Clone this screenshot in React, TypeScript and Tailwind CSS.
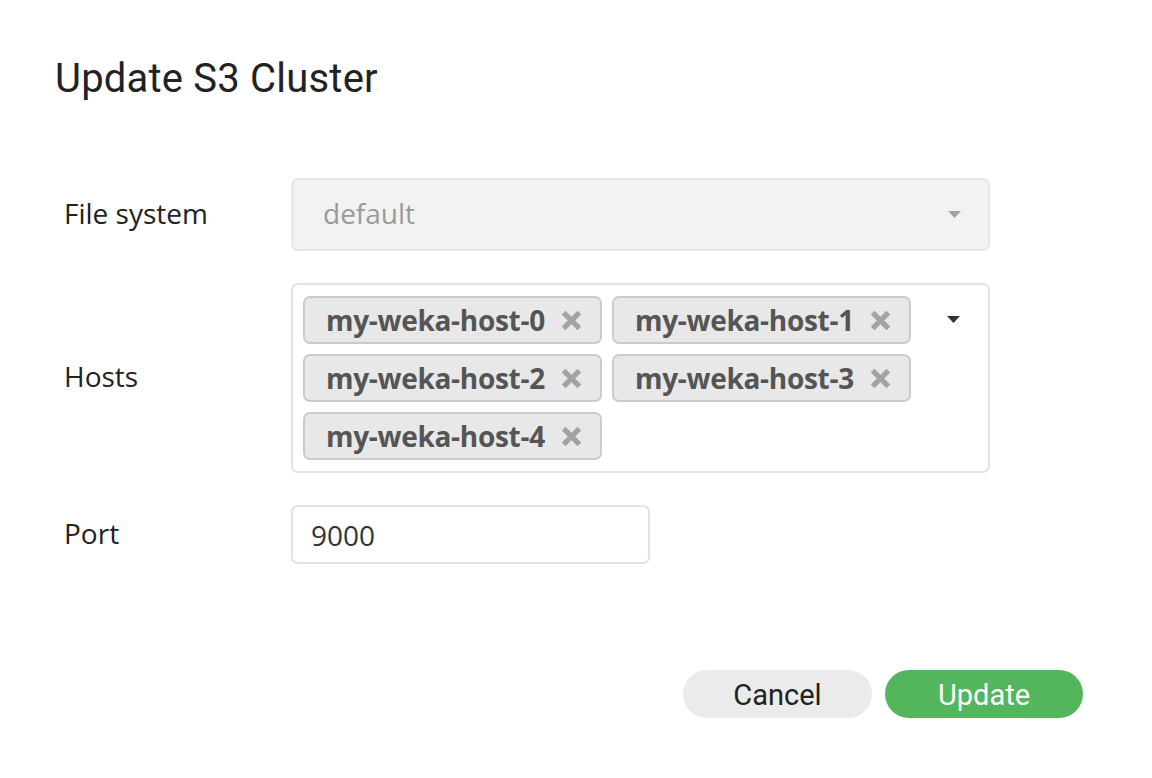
import React from 'react';

const hosts = ['my-weka-host-0', 'my-weka-host-1', 'my-weka-host-2', 'my-weka-host-3', 'my-weka-host-4'];

const Caret: React.FC<{ color: string }> = ({ color }) => (
  <svg width="13" height="7" viewBox="0 0 13 7">
    <path d="M0 0 L13 0 L6.5 7 Z" fill={color} />
  </svg>
);

const RemoveIcon = () => (
  <svg width="21" height="21" viewBox="0 0 20 20">
    <path d="M2.5 2.5 L17.5 17.5 M17.5 2.5 L2.5 17.5" stroke="#a3a3a3" strokeWidth="5" strokeLinecap="butt" />
  </svg>
);

const Chip: React.FC<{ name: string }> = ({ name }) => (
  <div className="flex items-center h-[48px] w-[299px] pl-[21px] pr-[18px] bg-[#e8e8e8] border-2 border-[#cbcbcb] rounded-[7px]">
    <span className="text-[28px] leading-none font-bold text-[#555555] tracking-[-0.3px]">{name}</span>
    <span className="ml-auto flex items-center">
      <RemoveIcon />
    </span>
  </div>
);

const App: React.FC = () => {
  const body = { fontFamily: '"Open Sans", "Liberation Sans", sans-serif' };
  const head = { fontFamily: 'Roboto, "Open Sans", sans-serif' };

  return (
    <div className="w-[1152px] h-[778px] bg-white text-[#222222] pl-[55px] pt-[54px]" style={body}>
      <h1 className="text-[40px] leading-[50px] text-[#222222] tracking-[0.2px]" style={head}>
        Update S3 Cluster
      </h1>

      <div className="pl-[9px] mt-[74px] flex flex-col">
        {/* file system */}
        <div className="flex items-center">
          <label className="w-[227px] text-[28px] pb-[4px]">File system</label>
          <div className="flex items-center w-[699px] h-[73px] bg-[#f2f2f2] border-2 border-[#e6e6e6] rounded-[7px] pl-[30px] pr-[27px]">
            <span className="text-[28px] text-[#9a9a9a] pb-[4px]">default</span>
            <span className="ml-auto">
              <Caret color="#a0a0a0" />
            </span>
          </div>
        </div>

        {/* hosts */}
        <div className="flex items-center mt-[32px]">
          <label className="w-[227px] text-[28px] pb-[4px]">Hosts</label>
          <div className="flex items-start w-[699px] h-[190px] border-2 border-[#e2e2e2] rounded-[7px] pl-[10px] pt-[11px] pr-[28px]">
            <div className="w-[610px] flex flex-wrap gap-[10px]">
              {hosts.map((h) => (
                <Chip key={h} name={h} />
              ))}
            </div>
            <span className="ml-auto mt-[20px]">
              <Caret color="#333333" />
            </span>
          </div>
        </div>

        {/* port */}
        <div className="flex items-center mt-[32px]">
          <label className="w-[227px] text-[28px] pb-[4px]">Port</label>
          <div className="flex items-center w-[359px] h-[59px] border-2 border-[#e2e2e2] rounded-[7px] pl-[18px]">
            <span className="text-[28px] text-[#333333]">9000</span>
          </div>
        </div>
      </div>

      <div className="flex justify-end gap-[13px] mt-[106px] pr-[69px]">
        <button
          className="w-[189px] h-[48px] rounded-full bg-[#ebebeb] text-[29px] text-[#222222] pt-[3px]"
          style={head}
        >
          Cancel
        </button>
        <button
          className="w-[198px] h-[48px] rounded-full bg-[#53b65c] text-[29px] text-white pt-[3px]"
          style={head}
        >
          Update
        </button>
      </div>
    </div>
  );
};

export default App;
